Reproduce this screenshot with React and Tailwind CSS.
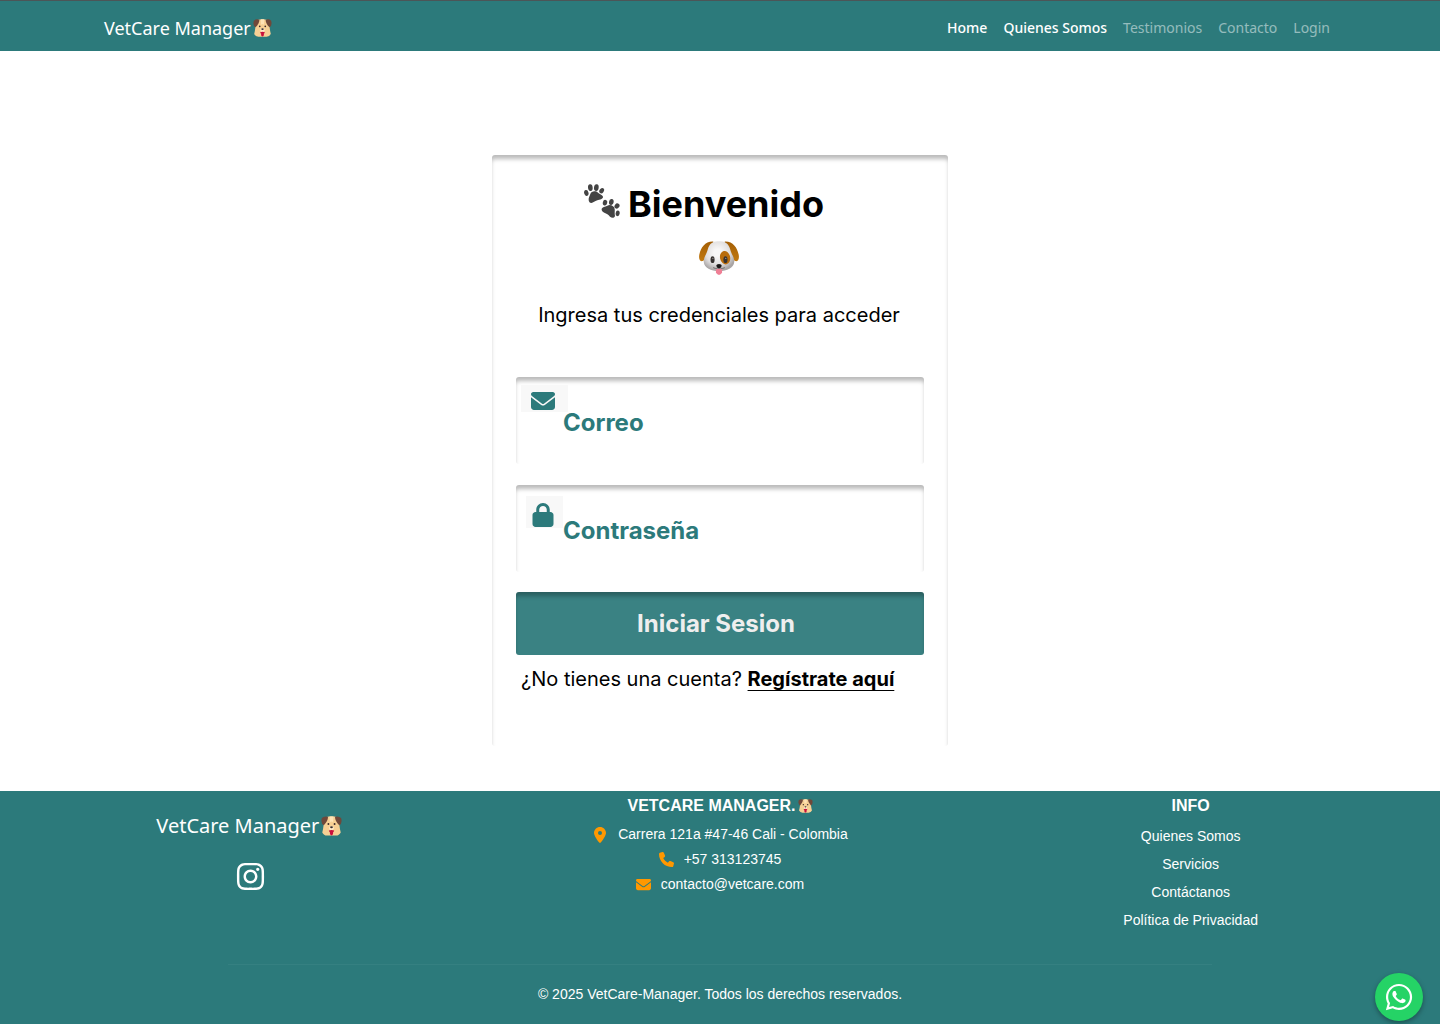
import { FaEnvelope, FaInstagram, FaLock, FaLocationDot, FaPhone, FaWhatsapp } from "react-icons/fa6";

const field =
  "h-[87px] w-full rounded-[3px] bg-white pt-1 pr-4 pl-[47px] text-2xl font-bold text-[#2c7a7b] shadow-[inset_0_5px_4px_-1px_rgba(0,0,0,0.27)] placeholder:text-[#2c7a7b] placeholder:opacity-100";

function Puppy({ className }) {
  return (
    <svg viewBox="0 0 54 52" className={className} aria-hidden="true">
      <path d="M12 3Q27-2 42 3L47 20Q49 36 51 43Q47 51 39 51H15Q7 51 3 43Q5 36 7 20Z" fill="#f7cf94" />
      <path d="M22 1H32L31 17Q27 12 23 17Z" fill="#ffe3b5" />
      <path d="M2 5Q8-1 18 2Q18 13 7 24Q-2 19 2 5Z" fill="#70483a" />
      <path d="M52 5Q46-1 36 2Q36 13 47 24Q56 19 52 5Z" fill="#70483a" />
      <circle cx="19" cy="21" r="2.5" fill="#3b2b2b" />
      <circle cx="35" cy="21" r="2.5" fill="#3b2b2b" />
      <path d="M21 34Q20 26 27 26Q34 26 33 34L29 38H25Z" fill="#ffe8c6" />
      <path d="M23 28Q27 25 31 28Q30 32 27 32Q24 32 23 28Z" fill="#34292b" />
      <path d="M20 38Q27 35 34 38L32 42H31V47Q27 54 23 47V42H22Z" fill="#c9103c" />
    </svg>
  );
}

function DogFace({ className }) {
  return (
    <svg viewBox="0 0 118 100" className={className} aria-hidden="true">
      <defs>
        <radialGradient id="fur" cx="0.46" cy="0.38" r="0.6">
          <stop offset="0.2" stopColor="#f8f7f7" />
          <stop offset="0.65" stopColor="#e2e0e0" />
          <stop offset="1" stopColor="#a9a5a5" />
        </radialGradient>
        <linearGradient id="ear" x1="0" y1="0" x2="0" y2="1">
          <stop offset="0" stopColor="#a35e05" />
          <stop offset="1" stopColor="#c2790f" />
        </linearGradient>
      </defs>
      <path d="M42 1C18 0 6 18 1 40C-2 54 4 61 11 59C20 55 27 38 42 8Z" fill="url(#ear)" />
      <path d="M76 1C100 0 112 18 117 40C120 54 114 61 107 59C98 55 91 38 76 8Z" fill="url(#ear)" />
      <path d="M59 1C77 0 87 8 92 24C95 38 105 48 104 62C102 80 83 89 59 89C35 89 16 80 14 62C13 48 23 38 26 24C31 8 41 0 59 1Z" fill="url(#fur)" />
      <ellipse cx="77" cy="49" rx="15" ry="20" transform="rotate(-12 77 49)" fill="#b86c0c" />
      <ellipse cx="40" cy="55" rx="6" ry="10" fill="#373230" />
      <ellipse cx="78" cy="55" rx="6" ry="10" fill="#373230" />
      <circle cx="41" cy="51" r="2" fill="#a5a09e" />
      <circle cx="79" cy="51" r="2" fill="#a5a09e" />
      <path d="M42 78Q52 84 59 77Q66 84 76 78" fill="none" stroke="#797373" strokeWidth="3" />
      <path d="M50 84Q59 80 68 84V92Q66 100 59 100Q52 100 50 92Z" fill="#ef7f95" />
      <path d="M51 73Q51 68 59 68Q67 68 67 73Q67 78 59 82Q51 78 51 73Z" fill="#191717" />
    </svg>
  );
}

function Paws({ className }) {
  return (
    <svg viewBox="0 0 108 100" className={className} fill="#444" aria-hidden="true">
      <ellipse cx="7" cy="26" rx="6.5" ry="9" transform="rotate(-15 7 26)" />
      <ellipse cx="19" cy="10" rx="7" ry="10" transform="rotate(-5 19 10)" />
      <ellipse cx="37" cy="10" rx="7" ry="10" transform="rotate(8 37 10)" />
      <ellipse cx="53" cy="19" rx="6.5" ry="8.5" transform="rotate(35 53 19)" />
      <path d="M14 48C13 40 17 36 19 29C22 20 35 18 42 25C47 30 57 31 57 38C57 45 47 45 40 48C32 50 28 56 22 56C17 56 15 53 14 48Z" />
      <ellipse cx="63" cy="55" rx="6.5" ry="8.5" transform="rotate(15 63 55)" />
      <ellipse cx="82" cy="53" rx="7" ry="9" transform="rotate(8 82 53)" />
      <ellipse cx="99" cy="65" rx="7" ry="8.5" transform="rotate(35 99 65)" />
      <ellipse cx="101" cy="87" rx="6" ry="8.5" transform="rotate(10 101 87)" />
      <path d="M53 73C55 67 63 68 70 64C79 59 91 65 92 74C93 81 91 87 93 94C92 101 84 102 78 97C73 90 68 88 61 85C55 82 52 78 53 73Z" />
    </svg>
  );
}

const nav = [
  ["Home", "text-white font-medium"],
  ["Quienes Somos", "text-white font-medium"],
  ["Testimonios", "text-white/50"],
  ["Contacto", "text-white/50"],
  ["Login", "text-white/50"],
];

export default function App() {
  return (
    <div className="flex min-h-screen flex-col bg-white font-['Inter',sans-serif] text-black">
      <header className="flex h-[51px] items-center justify-between border-t border-[#4c5557] bg-[#2c7a7b] pr-[110px] pl-[104px] pt-1 font-['Noto_Sans',sans-serif] text-white">
        <a href="#" className="flex items-center gap-0.5 text-lg">
          VetCare Manager
          <Puppy className="h-[18px] w-[19px]" />
        </a>
        <nav className="flex gap-4 text-sm">
          {nav.map(([label, tone]) => (
            <a key={label} href="#" className={tone}>
              {label}
            </a>
          ))}
        </nav>
      </header>

      <main className="flex flex-1 flex-col items-center pt-[104px] pb-[45px]">
        <form className="flex w-full max-w-[456px] flex-1 flex-col rounded-[3px] px-6 pt-6 shadow-[inset_0_5px_4px_-1px_rgba(0,0,0,0.27)]">
          <h1 className="flex items-center justify-center gap-2 pr-8 text-4xl leading-[50px] font-bold">
            <Paws className="mb-1.5 h-[34px] w-9" />
            Bienvenido
          </h1>
          <DogFace className="mt-3 mr-0.5 h-[34px] w-10 self-center" />
          <p className="mt-6 pr-0.5 text-center text-xl leading-8">Ingresa tus credenciales para acceder</p>

          <div className="relative mt-[46px]">
            <label htmlFor="correo" aria-label="Correo" className="absolute top-2 left-[5px] flex h-[27px] w-[47px] items-center justify-center bg-[#f8f8f8] pt-1 pr-[3px] text-[#2c7a7b]">
              <FaEnvelope size={24} />
            </label>
            <input id="correo" type="email" placeholder="Correo" className={field} />
          </div>
          <div className="relative mt-[21px]">
            <label htmlFor="clave" aria-label="Contraseña" className="absolute top-[11px] left-[10px] flex h-8 w-[37px] items-center justify-center bg-[#f8f8f8] pt-1.5 pr-[3px] text-[#2c7a7b]">
              <FaLock size={24} />
            </label>
            <input id="clave" type="password" placeholder="Contraseña" className={field} />
          </div>

          <button type="button" className="mt-5 h-[63px] rounded-[3px] bg-[#3a8283] pr-2 text-2xl font-bold text-[#eeeeee] shadow-[inset_0_5px_4px_-1px_rgba(0,0,0,0.27)]">
            Iniciar Sesion
          </button>
          <p className="mt-2 pl-[5px] text-xl leading-8">
            ¿No tienes una cuenta?{" "}
            <a href="#" className="font-bold underline decoration-1 underline-offset-4">
              Regístrate aquí
            </a>
          </p>
        </form>
      </main>

      <footer className="bg-[#2c7a7b] pb-5 font-['Liberation_Sans',sans-serif] text-sm text-white">
        <div className="grid h-[173px] grid-cols-3 px-3.5">
          <div className="flex flex-col items-center pt-[19px]">
            <a href="#" className="flex items-center gap-0.5 font-['Noto_Sans',sans-serif] text-xl leading-8">
              VetCare Manager
              <Puppy className="h-5 w-[21px]" />
            </a>
            <a href="#" aria-label="Instagram" className="mt-[19px] ml-0.5">
              <FaInstagram size={31} />
            </a>
          </div>
          <div className="flex flex-col items-center pt-[3px]">
            <h2 className="flex items-center gap-0.5 text-base leading-6 font-bold">
              VETCARE MANAGER.
              <Puppy className="h-3.5 w-[15px]" />
            </h2>
            <ul className="mt-1 flex flex-col items-center leading-[25px]">
              <li className="flex items-center gap-2.5">
                <FaLocationDot size={16} className="text-[#ff9800]" />
                Carrera 121a #47-46 Cali - Colombia
              </li>
              <li className="flex items-center gap-2.5">
                <FaPhone size={15} className="text-[#ff9800]" />
                +57 313123745
              </li>
              <li className="flex items-center gap-2.5">
                <FaEnvelope size={15} className="text-[#ff9800]" />
                contacto@vetcare.com
              </li>
            </ul>
          </div>
          <div className="flex flex-col items-center pt-[3px]">
            <h2 className="text-base leading-6 font-bold">INFO</h2>
            <ul className="mt-1 flex flex-col items-center leading-7">
              <li><a href="#">Quienes Somos</a></li>
              <li><a href="#">Servicios</a></li>
              <li><a href="#">Contáctanos</a></li>
              <li><a href="#">Política de Privacidad</a></li>
            </ul>
          </div>
        </div>
        <div className="mx-[228px] border-t border-[#358081] pt-[19px] text-center leading-5">
          © 2025 VetCare-Manager. Todos los derechos reservados.
        </div>
      </footer>

      <a href="#" aria-label="WhatsApp" className="fixed right-[17px] bottom-[3px] flex size-12 items-center justify-center rounded-full bg-[#25d366] text-white shadow-[0_2px_5px_rgba(0,0,0,0.35)]">
        <FaWhatsapp size={30} />
      </a>
    </div>
  );
}
